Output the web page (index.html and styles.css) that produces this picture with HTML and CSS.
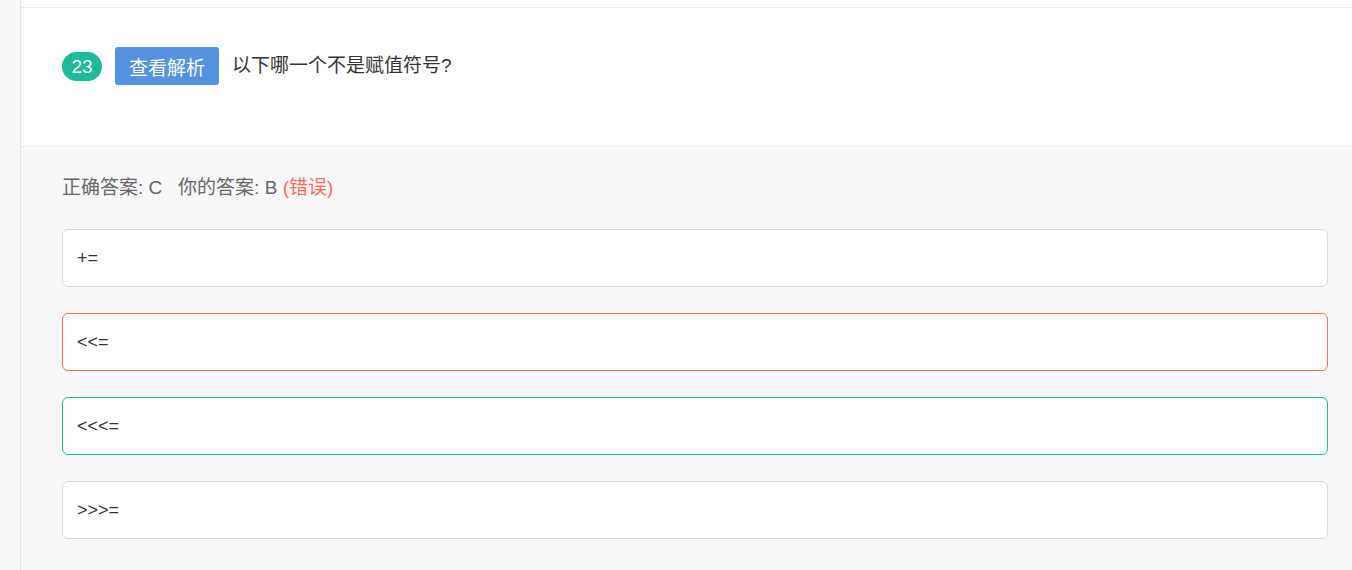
FILE: index.html
```html
<!DOCTYPE html>
<html lang="zh">
<head>
<meta charset="utf-8">
<link rel="stylesheet" href="styles.css">
</head>
<body>
<div class="page">
  <aside class="side"></aside>
  <main class="main">
    <div class="topbar"></div>
    <section class="question">
      <span class="num">23</span>
      <button class="btn">查看解析</button>
      <span class="qtext">以下哪一个不是赋值符号?</span>
    </section>
    <section class="answers">
      <p class="result">正确答案: C&nbsp;&nbsp;&nbsp;你的答案: B <span class="wrong">(错误)</span></p>
      <div class="opt">+=</div>
      <div class="opt opt-wrong">&lt;&lt;=</div>
      <div class="opt opt-right">&lt;&lt;&lt;=</div>
      <div class="opt">&gt;&gt;&gt;=</div>
    </section>
  </main>
</div>
</body>
</html>
```

FILE: styles.css
```css
html, body {
  margin: 0;
  padding: 0;
  height: 100%;
}
body {
  font-family: "Liberation Sans", Arial, "Noto Sans CJK SC", sans-serif;
  color: #333;
  background: #fff;
}
.page {
  display: flex;
  min-height: 570px;
}
.side {
  width: 20px;
  flex: none;
  background: #f5f6f8;
  border-right: 1px solid #e3e4e6;
}
.main {
  flex: 1;
  display: flex;
  flex-direction: column;
}
.topbar {
  height: 7px;
  border-bottom: 1px solid #ececec;
  background: #fff;
}
.question {
  display: flex;
  align-items: center;
  height: 139px;
  box-sizing: border-box;
  padding: 36px 24px 58px 41px;
  border-bottom: 1px solid #ececec;
  background: #fff;
}
.num {
  display: inline-flex;
  align-items: center;
  justify-content: center;
  width: 40px;
  height: 29px;
  border-radius: 15px;
  background: #1abc9c;
  color: #fff;
  font-size: 19px;
  margin-top: 1px;
}
.btn {
  margin-left: 13px;
  height: 38px;
  width: 104px;
  border: none;
  border-radius: 3px;
  background: #5294e2;
  color: #fff;
  font-family: "Noto Sans CJK SC", sans-serif;
  font-size: 19px;
  padding: 0;
}
.qtext {
  margin-left: 13px;
  font-size: 19px;
  color: #333;
  margin-top: -6px;
}
.answers {
  flex: 1;
  background: #f8f8f8;
  padding: 29px 24px 28px 41px;
}
.result {
  margin: 0 0 29px;
  font-size: 19px;
  line-height: 24px;
  color: #666;
}
.wrong {
  color: #ff6b5b;
}
.opt {
  display: flex;
  align-items: center;
  height: 58px;
  box-sizing: border-box;
  padding: 0 14px;
  margin-bottom: 26px;
  background: #fff;
  border: 1px solid #d9d9d9;
  border-radius: 6px;
  font-size: 18px;
  color: #333;
}
.opt-wrong {
  border-color: #ff6f4e;
}
.opt-right {
  border-color: #1abc9c;
}
```
